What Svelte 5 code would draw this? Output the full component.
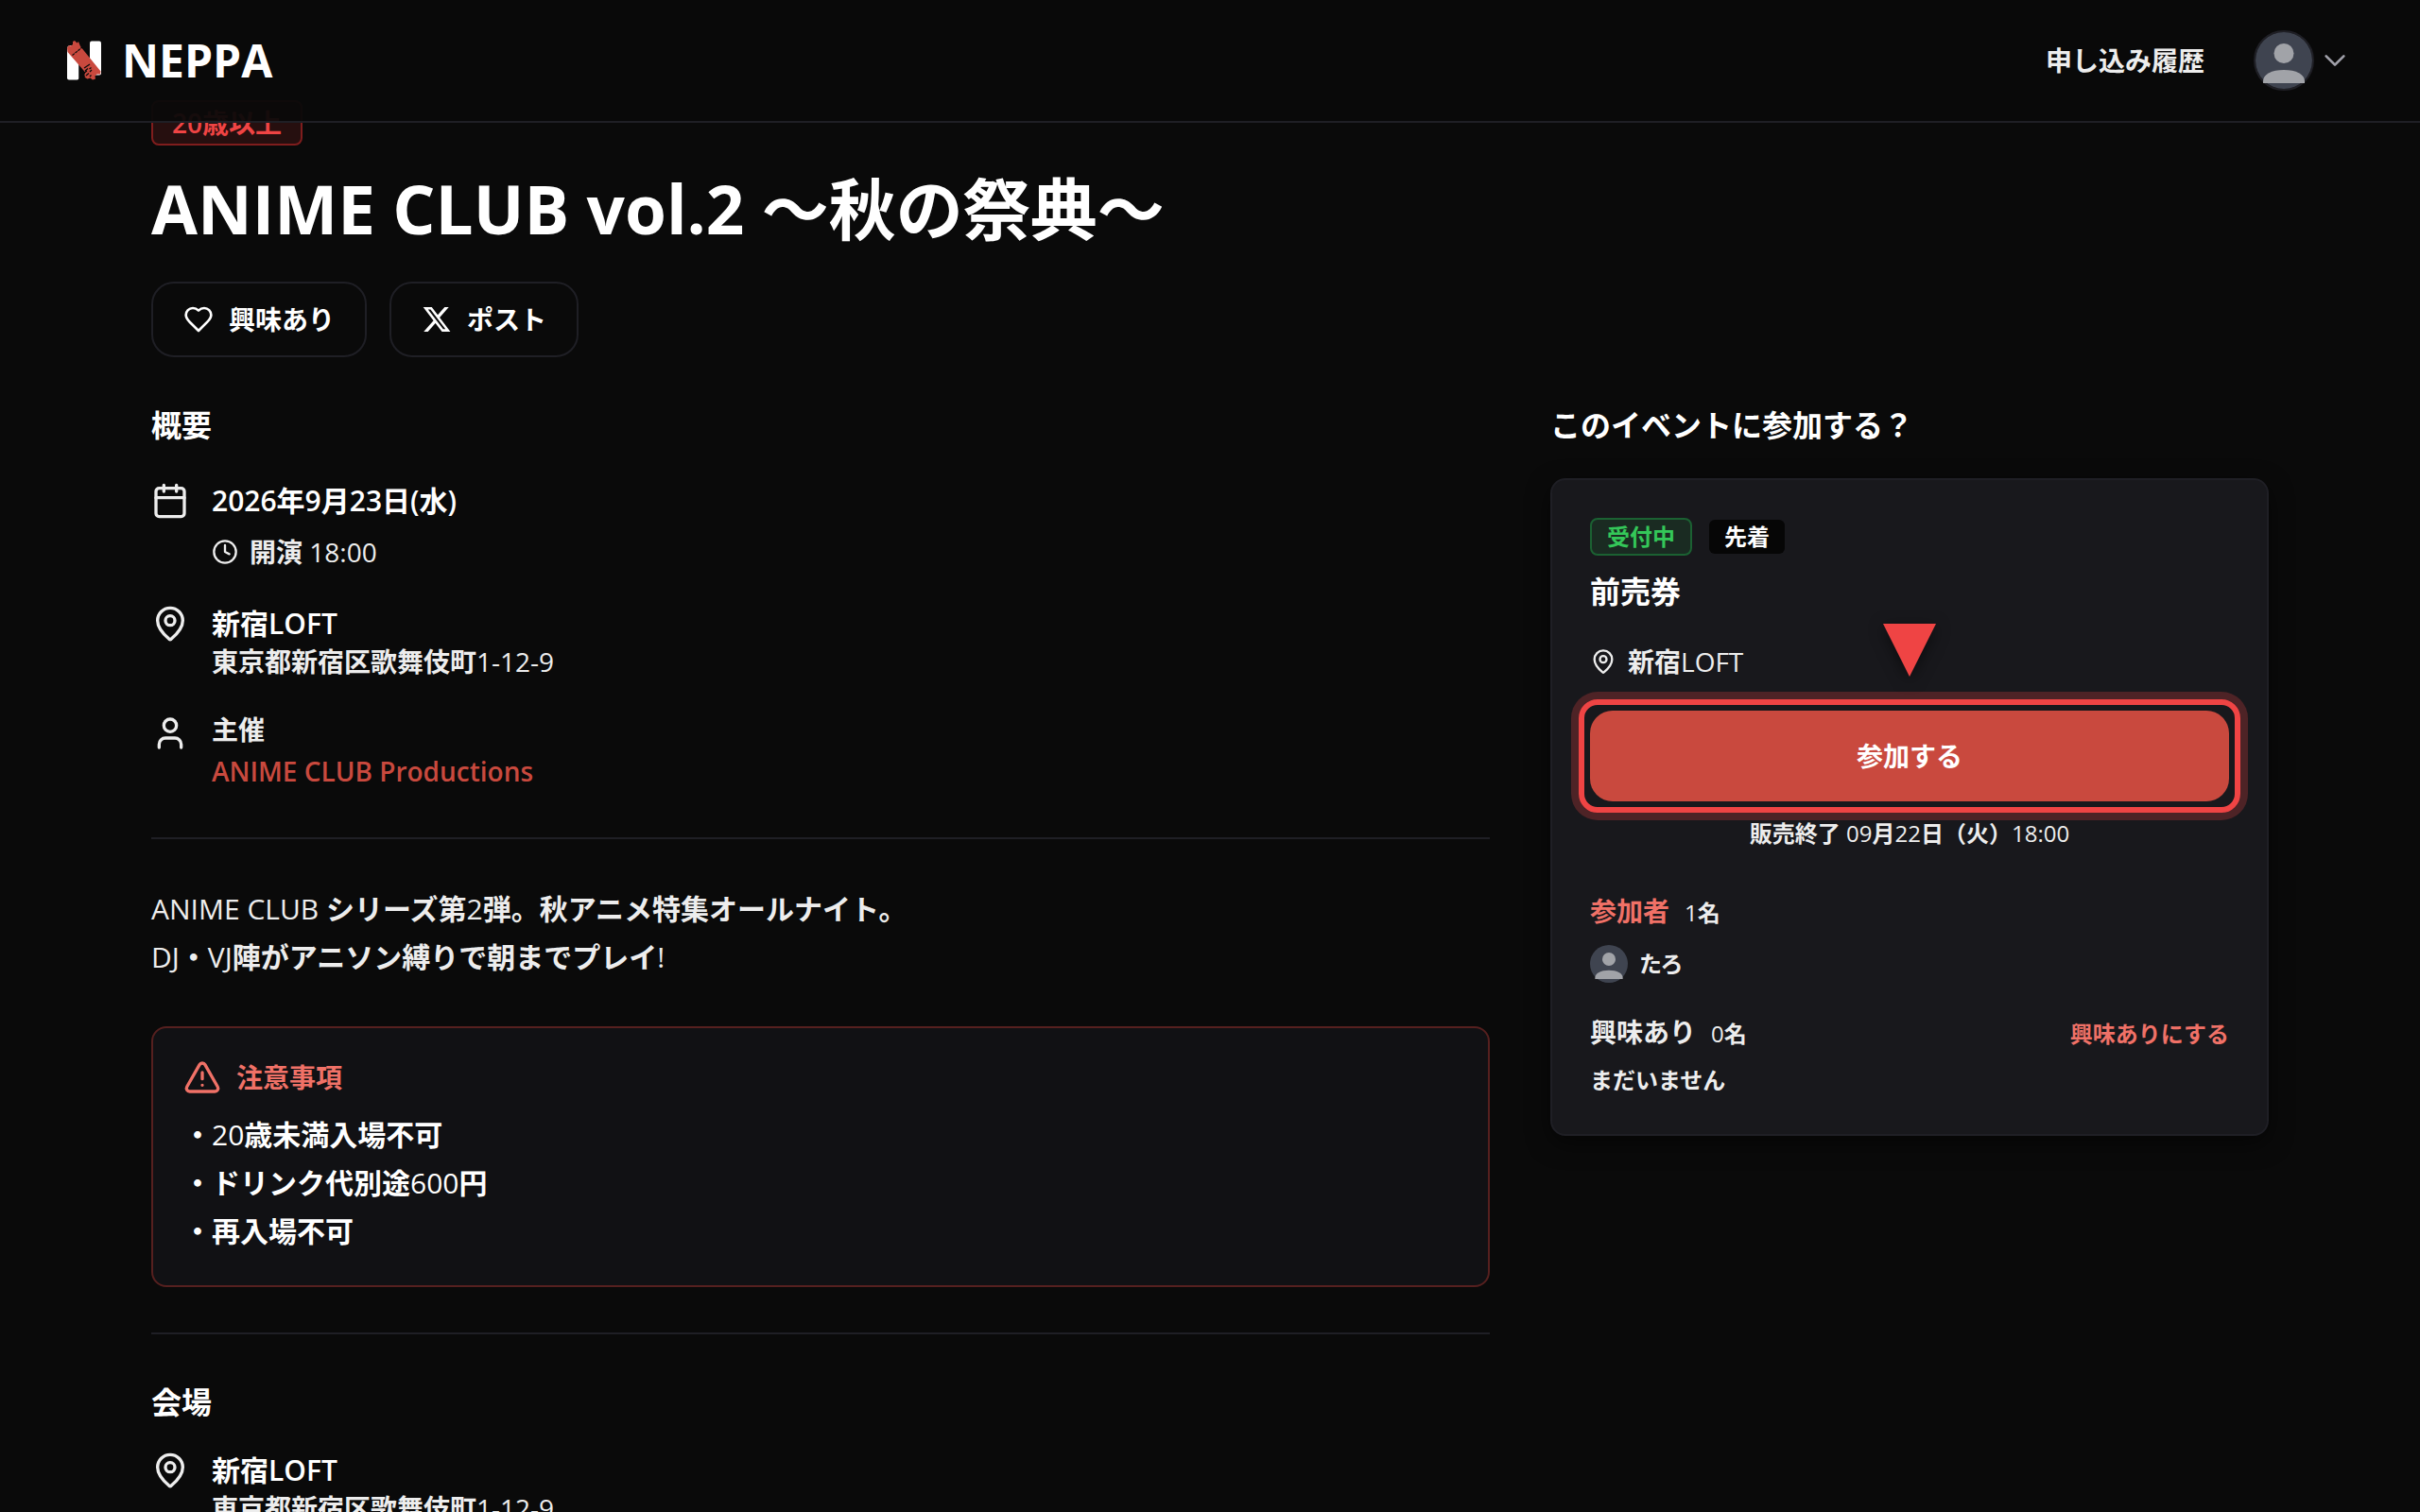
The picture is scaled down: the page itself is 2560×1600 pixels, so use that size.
<script lang="ts">
	const notices = ['20歳未満入場不可', 'ドリンク代別途600円', '再入場不可'];
	const description = ['ANIME CLUB シリーズ第2弾。秋アニメ特集オールナイト。', 'DJ・VJ陣がアニソン縛りで朝までプレイ!'];

	// Japanese runs are set heavier than the Latin letters and digits beside them.
	function runs(text: string) {
		return (text.match(/[\x00-\x7f]+|[^\x00-\x7f]+/g) ?? []).map((part) => ({
			part,
			ja: part.charCodeAt(0) > 0x7f
		}));
	}
</script>

{#snippet mixed(text: string)}{#each runs(text) as run}{#if run.ja}<span class="ja">{run.part}</span>{:else}{run.part}{/if}{/each}{/snippet}

{#snippet pin()}
	<svg class="icon" viewBox="0 0 24 24" aria-hidden="true">
		<path d="M20 10c0 4.993-5.539 10.193-7.399 11.799a1 1 0 0 1-1.202 0C9.539 20.193 4 14.993 4 10a8 8 0 0 1 16 0" />
		<circle cx="12" cy="10" r="3" />
	</svg>
{/snippet}

{#snippet avatar()}
	<svg class="avatar" viewBox="0 0 60 60" aria-hidden="true">
		<circle cx="30" cy="30" r="30" fill="#3f4450" />
		<circle cx="30" cy="22.5" r="10.5" fill="#a1a3a8" />
		<path d="M8 54v-2c0-7.5 9-12 22-12s22 4.5 22 12v2z" fill="#a1a3a8" />
	</svg>
{/snippet}

<header class="site-header">
	<a class="brand" href="#top">
		<svg class="logo" viewBox="0 0 36 42" aria-hidden="true">
			<rect x="0" y="5" width="12.5" height="36.5" rx="2" fill="#fff" />
			<rect x="24" y="0.5" width="12" height="36" rx="2" fill="#fff" />
			<path d="M0 0h7L0 7zM12.5 22L18 32v10h-5.5zM24 14l-4-6V0h4z" fill="#0a0a0a" />
			<path
				d="M0 7.5l2-2.5 2 .5 2-1.5 0-3L8 0l2.5 2.5L12 1l2 5 21.500 26.500-.5 3-3.5 0-2 2 .5 3-3 1-2.5-2-3 1-3.5-2 1-5-2-2.500L.5 12z"
				fill="#c9493e"
			/>
			<path d="M5.5 15.5L16 7" stroke="#0a0a0a" stroke-width="1.2" stroke-dasharray="3 .8" />
			<path
				d="M18 29l6-4M19 32l3-2.5M23.5 30l2-1.5M17 35l4-3M24 33l2-2M20 37l3-2.5M17 39l2-1.5M24 38l1.5-1.5"
				stroke="#0a0a0a"
				stroke-width="1.3"
			/>
		</svg>
		<span>NEPPA</span>
	</a>
	<nav class="account">
		<a class="history" href="#history">申し込み履歴</a>
		<button class="profile" type="button" aria-label="アカウント">
			<span class="ringed">{@render avatar()}</span>
			<svg class="icon chevron" viewBox="0 0 24 24" aria-hidden="true"><path d="m5 8.500 7 7 7-7" /></svg>
		</button>
	</nav>
</header>

<main class="page" id="top">
	<span class="age">20歳以上</span>
	<h1>ANIME CLUB vol.2 〜秋の祭典〜</h1>
	<div class="actions">
		<button class="pill" type="button">
			<svg class="icon" viewBox="0 0 24 24" aria-hidden="true">
				<path
					d="M19 14c1.490-1.460 3-3.210 3-5.500A5.500 5.500 0 0 0 16.500 3c-1.760 0-3 .5-4.500 2-1.500-1.500-2.740-2-4.500-2A5.500 5.500 0 0 0 2 8.500c0 2.300 1.500 4.050 3 5.500l7 7Z"
				/>
			</svg>
			興味あり
		</button>
		<button class="pill" type="button">
			<svg class="x" viewBox="0 0 24 24" aria-hidden="true">
				<path
					d="M18.244 2.250h3.308l-7.227 8.260 8.502 11.240H16.170l-5.214-6.817L4.990 21.750H1.680l7.730-8.835L1.254 2.250H8.080l4.713 6.231zm-1.161 17.520h1.833L7.084 4.126H5.117z"
				/>
			</svg>
			ポスト
		</button>
	</div>

	<div class="columns">
		<div class="main">
			<section>
				<h2>概要</h2>
				<ul class="facts">
					<li>
						<svg class="icon" viewBox="0 0 24 24" aria-hidden="true">
							<path d="M8 2v4M16 2v4M3 10h18" />
							<rect x="3" y="4" width="18" height="18" rx="2" />
						</svg>
						<div>
							<p class="strong">2026年9月23日(水)</p>
							<p class="time">
								<svg class="icon" viewBox="0 0 24 24" aria-hidden="true">
									<circle cx="12" cy="12" r="10" />
									<path d="M12 6v6l4 2" />
								</svg>
								<span>{@render mixed('開演 18:00')}</span>
							</p>
						</div>
					</li>
					<li>
						{@render pin()}
						<div>
							<p class="strong">新宿LOFT</p>
							<p>{@render mixed('東京都新宿区歌舞伎町1-12-9')}</p>
						</div>
					</li>
					<li>
						<svg class="icon" viewBox="0 0 24 24" aria-hidden="true">
							<path d="M19 21v-2a4 4 0 0 0-4-4H9a4 4 0 0 0-4 4v2" />
							<circle cx="12" cy="7" r="4" />
						</svg>
						<div>
							<p class="role">主催</p>
							<a class="organizer" href="#organizer">ANIME CLUB Productions</a>
						</div>
					</li>
				</ul>
			</section>

			<section class="about">
				<div class="description">
					{#each description as line}
						<p>{@render mixed(line)}</p>
					{/each}
				</div>
				<div class="notice">
					<h3>
						<svg class="icon" viewBox="0 0 24 24" aria-hidden="true">
							<path d="m21.730 18-8-14a2 2 0 0 0-3.480 0l-8 14A2 2 0 0 0 4 21h16a2 2 0 0 0 1.730-3" />
							<path d="M12 9v4M12 17h.01" />
						</svg>
						注意事項
					</h3>
					{#each notices as notice}
						<p>{@render mixed('・' + notice)}</p>
					{/each}
				</div>
			</section>

			<section class="venue">
				<h2>会場</h2>
				<ul class="facts">
					<li>
						{@render pin()}
						<div>
							<p class="strong">新宿LOFT</p>
							<p>{@render mixed('東京都新宿区歌舞伎町1-12-9')}</p>
						</div>
					</li>
				</ul>
			</section>
		</div>

		<aside>
			<h2>このイベントに参加する？</h2>
			<div class="card">
				<div class="tags">
					<span class="tag open">受付中</span>
					<span class="tag">先着</span>
				</div>
				<h3>前売券</h3>
				<p class="place">
					{@render pin()}
					<span>{@render mixed('新宿LOFT')}</span>
				</p>
				<div class="join-wrap">
					<svg class="pointer" viewBox="0 0 56 56" aria-hidden="true"><path d="M0 0h56L28 56z" /></svg>
					<button class="join" type="button">参加する</button>
				</div>
				<p class="deadline">{@render mixed('販売終了 09月22日（火）18:00')}</p>

				<div class="people">
					<h4 class="accent">参加者</h4>
					<span class="count">{@render mixed('1名')}</span>
				</div>
				<p class="member">{@render avatar()} たろ</p>

				<div class="people interested">
					<h4>興味あり</h4>
					<span class="count">{@render mixed('0名')}</span>
					<button class="link" type="button">興味ありにする</button>
				</div>
				<p class="empty">まだいません</p>
			</div>
		</aside>
	</div>
</main>

<style>
	:global(body) {
		background: #0a0a0a;
		color: #ededed;
		font-family: 'Open Sans', 'Noto Sans CJK JP', sans-serif;
		font-size: 28px;
		line-height: 40px;
		overflow: hidden;
	}

	:global(#app) {
		height: 100vh;
		overflow: hidden;
	}

	h1,
	h2,
	h3,
	h4,
	p,
	ul {
		margin: 0;
		padding: 0;
		list-style: none;
	}

	a {
		color: inherit;
		text-decoration: none;
	}

	button {
		padding: 0;
		border: 0;
		background: none;
		color: inherit;
		font: inherit;
	}

	.ja {
		font-weight: 700;
	}

	.icon {
		flex: none;
		width: 40px;
		height: 40px;
		fill: none;
		stroke: currentColor;
		stroke-width: 2;
		stroke-linecap: round;
		stroke-linejoin: round;
	}

	.avatar {
		display: block;
		flex: none;
		width: 40px;
		height: 40px;
	}

	.site-header {
		position: relative;
		z-index: 1;
		display: flex;
		align-items: center;
		justify-content: space-between;
		height: 128px;
		padding: 0 74px 0 71px;
		border-bottom: 2px solid #1f1f25;
		background: rgba(10, 10, 10, 0.95);
	}

	.brand {
		display: flex;
		align-items: center;
		gap: 22px;
		color: #fff;
		font-size: 48px;
		font-weight: 700;
	}

	.logo {
		width: 36px;
		height: 42px;
	}

	.account {
		display: flex;
		align-items: center;
		gap: 52px;
		font-weight: 700;
	}

	.profile {
		display: flex;
		align-items: center;
		gap: 6px;
	}

	.ringed {
		border: 2px solid #1f1f25;
		border-radius: 50%;
	}

	.ringed .avatar {
		width: 60px;
		height: 60px;
	}

	.chevron {
		width: 32px;
		height: 32px;
		color: #a1a1aa;
	}

	.page {
		margin: -24px 160px 0;
	}

	.age {
		display: inline-block;
		padding: 2px 20px;
		border: 2px solid #7f1d1d;
		border-radius: 8px;
		background: #260f0f;
		color: #ef4444;
		font-weight: 600;
	}

	h1 {
		margin-top: 22px;
		color: #fff;
		font-size: 71px;
		font-weight: 700;
		line-height: 90px;
	}

	.actions {
		display: flex;
		gap: 24px;
		margin-top: 32px;
	}

	.pill {
		display: flex;
		align-items: center;
		gap: 16px;
		height: 80px;
		padding: 0 32px;
		border: 2px solid #1f1f25;
		border-radius: 24px;
		color: #fff;
		font-weight: 700;
	}

	.pill .icon,
	.x {
		width: 32px;
		height: 32px;
	}

	.x {
		fill: currentColor;
	}

	.columns {
		display: grid;
		grid-template-columns: minmax(0, 1fr) 760px;
		gap: 64px;
		align-items: start;
		margin-top: 48px;
	}

	h2 {
		color: #fff;
		font-size: 32px;
		font-weight: 700;
		line-height: 48px;
	}

	.facts {
		display: flex;
		flex-direction: column;
		gap: 36px;
		margin-top: 36px;
	}

	.venue .facts {
		margin-top: 28px;
	}

	.facts li {
		display: flex;
		gap: 24px;
	}

	.strong {
		color: #fff;
		font-size: 30px;
		font-weight: 600;
	}

	.time {
		display: flex;
		align-items: center;
		gap: 12px;
		margin-top: 14px;
	}

	.time .icon,
	.place .icon {
		width: 28px;
		height: 28px;
	}

	.role {
		font-weight: 700;
		line-height: 32px;
	}

	.organizer {
		display: block;
		margin-top: 6px;
		color: #c9493e;
		font-weight: 600;
		line-height: 44px;
	}

	.about,
	.venue {
		margin-top: 48px;
		padding-top: 48px;
		border-top: 2px solid #1f1f25;
	}

	.description,
	.notice p {
		font-size: 30px;
		line-height: 51px;
	}

	.notice {
		margin-top: 48px;
		padding: 32px;
		border: 2px solid #56201f;
		border-radius: 16px;
		background: #111114;
		color: #fff;
	}

	.notice h3 {
		display: flex;
		gap: 16px;
		margin-bottom: 15px;
		color: #f07167;
		font-size: 28px;
		font-weight: 700;
	}

	.card {
		margin-top: 32px;
		padding: 40px;
		border: 2px solid #1f1f25;
		border-radius: 16px;
		background: #18181c;
		box-shadow: 0 8px 24px rgba(0, 0, 0, 0.5);
	}

	.tags {
		display: flex;
		align-items: center;
		gap: 18px;
	}

	.tag {
		padding: 0 16px;
		border-radius: 6px;
		background: #060606;
		color: #fff;
		font-size: 24px;
		font-weight: 700;
		line-height: 36px;
	}

	.open {
		border: 2px solid #1b6132;
		border-radius: 8px;
		background: #1a2b22;
		color: #34c759;
	}

	.card h3 {
		margin-top: 16px;
		color: #fff;
		font-size: 32px;
		font-weight: 700;
		line-height: 44px;
	}

	.place {
		display: flex;
		align-items: center;
		gap: 12px;
		margin-top: 32px;
	}

	.join-wrap {
		position: relative;
		margin-top: 32px;
	}

	.join {
		display: block;
		width: 100%;
		height: 96px;
		border-radius: 24px;
		background: #c9493e;
		color: #fff;
		font-weight: 700;
	}

	/* Highlight frame drawn round the join button. */
	.join-wrap::after {
		content: '';
		position: absolute;
		inset: -12px;
		border: 6px solid #ef4444;
		border-radius: 20px;
		box-shadow: 0 0 0 8px rgba(239, 68, 68, 0.25);
		pointer-events: none;
	}

	.pointer {
		position: absolute;
		bottom: 132px;
		left: calc(50% - 28px);
		width: 56px;
		height: 56px;
		overflow: visible;
		fill: #ef4444;
		filter: drop-shadow(0 4px 8px rgba(0, 0, 0, 0.5));
	}

	.deadline {
		margin-top: 16px;
		font-size: 24px;
		line-height: 36px;
		text-align: center;
	}

	.people {
		display: flex;
		align-items: baseline;
		gap: 16px;
		margin-top: 44px;
	}

	h4 {
		font-size: 28px;
		font-weight: 700;
	}

	.accent,
	.link {
		color: #f07167;
	}

	.count,
	.link,
	.member,
	.empty {
		font-size: 24px;
		line-height: 34px;
	}

	.link,
	.member,
	.empty {
		font-weight: 700;
	}

	.link {
		margin-left: auto;
	}

	.member {
		display: flex;
		align-items: center;
		gap: 12px;
		margin-top: 16px;
	}

	.interested {
		margin-top: 32px;
	}

	.empty {
		margin-top: 14px;
	}
</style>
